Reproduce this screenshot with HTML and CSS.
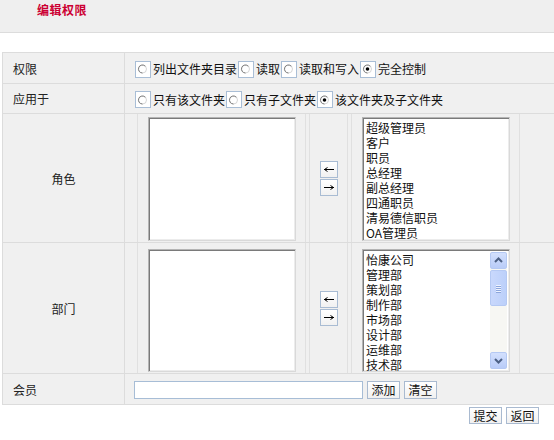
FILE: index.html
```html
<!DOCTYPE html>
<html lang="zh-CN">
<head>
<meta charset="utf-8">
<title>编辑权限</title>
<link rel="stylesheet" href="styles.css">
</head>
<body>
<div class="header"><h1 class="title">编辑权限</h1></div>
<table class="form">
  <tr class="r1">
    <th class="lbl">权限</th>
    <td class="val"><div class="opts">
      <label class="opt"><span class="rb"><svg width="16" height="16" viewBox="0 0 16 16"><circle cx="7.5" cy="8" r="4" fill="#fff" stroke="#d6d6d6"/><path d="M10.3 5.2 A4 4 0 1 0 7.5 12" fill="none" stroke="#808080"/></svg></span>列出文件夹目录</label>
      <label class="opt"><span class="rb"><svg width="16" height="16" viewBox="0 0 16 16"><circle cx="7.5" cy="8" r="4" fill="#fff" stroke="#d6d6d6"/><path d="M10.3 5.2 A4 4 0 1 0 7.5 12" fill="none" stroke="#808080"/></svg></span>读取</label>
      <label class="opt"><span class="rb"><svg width="16" height="16" viewBox="0 0 16 16"><circle cx="7.5" cy="8" r="4" fill="#fff" stroke="#d6d6d6"/><path d="M10.3 5.2 A4 4 0 1 0 7.5 12" fill="none" stroke="#808080"/></svg></span>读取和写入</label>
      <label class="opt"><span class="rb"><svg width="16" height="16" viewBox="0 0 16 16"><circle cx="7.5" cy="8" r="4" fill="#fff" stroke="#d6d6d6"/><path d="M10.3 5.2 A4 4 0 1 0 7.5 12" fill="none" stroke="#808080"/><circle cx="7.5" cy="8" r="1.8" fill="#000"/></svg></span>完全控制</label>
    </div></td>
  </tr>
  <tr class="r2">
    <th class="lbl">应用于</th>
    <td class="val"><div class="opts">
      <label class="opt"><span class="rb"><svg width="16" height="16" viewBox="0 0 16 16"><circle cx="7.5" cy="8" r="4" fill="#fff" stroke="#d6d6d6"/><path d="M10.3 5.2 A4 4 0 1 0 7.5 12" fill="none" stroke="#808080"/></svg></span>只有该文件夹</label>
      <label class="opt"><span class="rb"><svg width="16" height="16" viewBox="0 0 16 16"><circle cx="7.5" cy="8" r="4" fill="#fff" stroke="#d6d6d6"/><path d="M10.3 5.2 A4 4 0 1 0 7.5 12" fill="none" stroke="#808080"/></svg></span>只有子文件夹</label>
      <label class="opt"><span class="rb"><svg width="16" height="16" viewBox="0 0 16 16"><circle cx="7.5" cy="8" r="4" fill="#fff" stroke="#d6d6d6"/><path d="M10.3 5.2 A4 4 0 1 0 7.5 12" fill="none" stroke="#808080"/><circle cx="7.5" cy="8" r="1.8" fill="#000"/></svg></span>该文件夹及子文件夹</label>
    </div></td>
  </tr>
  <tr class="r3">
    <th class="lbl center">角色</th>
    <td class="val nest">
      <table class="picker">
        <tr>
          <td class="pc side"><div class="listbox"></div></td>
          <td class="pc mid">
            <div class="arrows">
              <button class="abtn" type="button"><svg width="10" height="5" viewBox="0 0 10 5"><path d="M0 2.5H10M0.5 2.5L3.5 0.5M0.5 2.5L3.5 4.5" stroke="#000" fill="none"/></svg></button>
              <button class="abtn" type="button"><svg width="10" height="5" viewBox="0 0 10 5"><path d="M0 2.5H10M9.5 2.5L6.5 0.5M9.5 2.5L6.5 4.5" stroke="#000" fill="none"/></svg></button>
            </div>
          </td>
          <td class="pc side"><div class="listbox">
            <div class="item">超级管理员</div>
            <div class="item">客户</div>
            <div class="item">职员</div>
            <div class="item">总经理</div>
            <div class="item">副总经理</div>
            <div class="item">四通职员</div>
            <div class="item">清易德信职员</div>
            <div class="item">OA管理员</div>
          </div></td>
        </tr>
      </table>
    </td>
  </tr>
  <tr class="r4">
    <th class="lbl center">部门</th>
    <td class="val nest">
      <table class="picker">
        <tr>
          <td class="pc side"><div class="listbox tall"></div></td>
          <td class="pc mid">
            <div class="arrows">
              <button class="abtn" type="button"><svg width="10" height="5" viewBox="0 0 10 5"><path d="M0 2.5H10M0.5 2.5L3.5 0.5M0.5 2.5L3.5 4.5" stroke="#000" fill="none"/></svg></button>
              <button class="abtn" type="button"><svg width="10" height="5" viewBox="0 0 10 5"><path d="M0 2.5H10M9.5 2.5L6.5 0.5M9.5 2.5L6.5 4.5" stroke="#000" fill="none"/></svg></button>
            </div>
          </td>
          <td class="pc side"><div class="listbox tall scroll">
            <div class="items">
              <div class="item">怡康公司</div>
              <div class="item">管理部</div>
              <div class="item">策划部</div>
              <div class="item">制作部</div>
              <div class="item">市场部</div>
              <div class="item">设计部</div>
              <div class="item">运维部</div>
              <div class="item">技术部</div>
            </div>
            <div class="sbar">
              <div class="sbtn"><svg width="15" height="15" viewBox="0 0 15 15"><path d="M4 9L7.5 5.5L11 9" stroke="#4d6185" stroke-width="2" fill="none"/></svg></div>
              <div class="thumb"><svg width="15" height="34" viewBox="0 0 15 34"><path d="M5 14.5H10M5 16.5H10M5 18.5H10M5 20.5H10" stroke="#eef3ff"/><path d="M5 15.5H10M5 17.5H10M5 19.5H10M5 21.5H10" stroke="#8ca6dc"/></svg></div>
              <div class="track"></div>
              <div class="sbtn"><svg width="15" height="15" viewBox="0 0 15 15"><path d="M4 6L7.5 9.5L11 6" stroke="#4d6185" stroke-width="2" fill="none"/></svg></div>
            </div>
          </div></td>
        </tr>
      </table>
    </td>
  </tr>
  <tr class="r5">
    <th class="lbl">会员</th>
    <td class="val"><div class="member">
      <input class="txt" type="text">
      <button class="btn" type="button">添加</button>
      <button class="btn" type="button">清空</button>
    </div></td>
  </tr>
</table>
<div class="actions">
  <button class="btn" type="button">提交</button>
  <button class="btn" type="button">返回</button>
</div>
</body>
</html>
```

FILE: styles.css
```css
html, body {
  margin: 0;
  padding: 0;
  background: #fff;
  overflow: hidden;
}
body {
  font-family: "Noto Sans CJK SC", "Noto Sans", sans-serif;
  font-size: 12px;
  color: #111;
  width: 554px;
}
.header {
  height: 32px;
  background: #efefef;
  border-bottom: 1px solid #dcdcdc;
}
.title {
  margin: 0;
  padding: 3px 0 0 37px;
  font-size: 12px;
  line-height: 14px;
  font-weight: bold;
  color: #cc0033;
  letter-spacing: 0.5px;
}
.form {
  margin: 19px 0 0 2px;
  width: 552px;
  border-collapse: separate;
  border-spacing: 0;
  border-top: 1px solid #dcdcdc;
  border-left: 1px solid #dcdcdc;
  background: #f0f0f0;
}
.form > tbody > tr > th,
.form > tbody > tr > td {
  border-bottom: 1px solid #dcdcdc;
  padding: 0;
  vertical-align: middle;
}
.lbl {
  width: 111px;
  padding-left: 10px !important;
  text-align: left;
  font-weight: normal;
  color: #222;
  border-right: 1px solid #dcdcdc;
}
.lbl.center {
  width: 121px;
  padding-left: 0 !important;
  text-align: center;
}
.val {
  padding-left: 9px !important;
}
.r1 > th, .r1 > td { height: 30px; }
.r2 > th, .r2 > td { height: 29px; }
.r3 > th, .r3 > td { height: 128px; }
.r4 > th, .r4 > td { height: 130px; }
.r5 > th, .r5 > td { height: 30px; }

.opts {
  display: flex;
  align-items: center;
  padding-top: 2px;
  line-height: 16px;
}
.opt {
  display: flex;
  align-items: center;
  white-space: nowrap;
}
.rb {
  display: block;
  width: 14px;
  height: 15px;
  margin: 0 2px 0 1px;
  border: 1px solid #a9bed6;
  background: #fff;
}
.rb svg {
  display: block;
  margin: -0.5px 0 0 -1px;
}

.picker {
  border-collapse: separate;
  border-spacing: 3px 0;
}
.pc {
  padding: 0;
  border-left: 1px solid #e0e0e0;
  border-right: 1px solid #e0e0e0;
  vertical-align: middle;
}
.r3 .pc { height: 128px; }
.r4 .pc { height: 130px; }
.pc.side {
  padding: 0 9px 0 10px;
}
.pc.mid {
  width: 37px;
}
.arrows {
  display: flex;
  flex-direction: column;
  align-items: center;
  gap: 1px;
}
.abtn {
  width: 18px;
  height: 17px;
  padding: 0;
  margin: 0;
  border: 1px solid #a9bcd3;
  background: linear-gradient(#ffffff, #f1f1f1);
  display: flex;
  align-items: center;
  justify-content: center;
}
.abtn svg { display: block; }

.listbox {
  box-sizing: border-box;
  width: 148px;
  height: 124px;
  margin-top: 1px;
  background: #fff;
  border: 1px solid #b4b4b4;
  border-right-color: #d9d9d9;
  border-bottom-color: #d9d9d9;
  box-shadow: inset 1px 1px 0 #7a7a7a, inset -1px -1px 0 #ececec;
  padding: 2px 0 0 3px;
  overflow: hidden;
}
.listbox.tall {
  height: 123px;
  margin-top: 4px;
}
.item {
  height: 15px;
  line-height: 15px;
  white-space: nowrap;
  color: #111;
}
.listbox.scroll {
  display: flex;
  padding: 2px 2px 2px 3px;
}
.items {
  flex: 1;
}
.sbar {
  width: 17px;
  display: flex;
  flex-direction: column;
  background: #f7f7f3;
}
.sbtn {
  box-sizing: border-box;
  height: 17px;
  border: 1px solid #b5c9f3;
  border-radius: 2px;
  background: linear-gradient(#d3e0fd, #b9ccf8);
}
.sbtn svg, .thumb svg { display: block; }
.thumb {
  box-sizing: border-box;
  height: 36px;
  margin-top: 1px;
  border: 1px solid #b5c9f3;
  border-radius: 2px;
  background: linear-gradient(90deg, #c9d8fc, #bcd0fa);
}
.track { flex: 1; }

.member {
  display: flex;
  align-items: center;
  gap: 4px;
  padding-top: 1px;
}
.txt {
  box-sizing: border-box;
  width: 229px;
  height: 18px;
  margin: 0;
  border: 1px solid #a7bdd6;
  background: #fff;
  padding: 0 2px;
}
.btn {
  box-sizing: border-box;
  height: 18px;
  width: 33px;
  padding: 0;
  margin: 0;
  border: 1px solid #a9bad0;
  background: linear-gradient(#ffffff, #f0f0f0);
  font-family: "Noto Sans CJK SC", "Noto Sans", sans-serif;
  font-size: 12px;
  line-height: 16px;
  color: #111;
}
.actions {
  display: flex;
  justify-content: flex-end;
  gap: 4px;
  padding: 2px 15px 0 0;
}
.actions .btn { height: 17px; line-height: 15px; }
```
